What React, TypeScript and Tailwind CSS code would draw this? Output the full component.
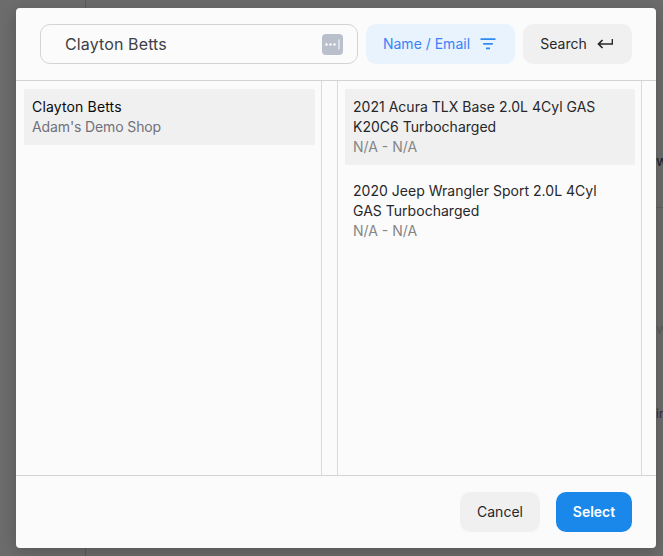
export default function App() {
  return (
    <div className="relative h-[556px] w-[663px] overflow-hidden bg-[#6b6b6b] font-['Inter',sans-serif] text-sm">
      <div className="flex h-full">
        <div className="h-full w-[86px] border-r border-[#5a5a5a] bg-[#6c6c6c]" />
        <div className="h-full flex-1 bg-[#6b6b6b]" />
      </div>
      <span className="absolute left-[656px] top-[151px] text-[14px] font-medium leading-5 text-[#1f2937]">w</span>
      <div className="absolute left-[656px] top-[207px] h-px w-[7px] bg-[#5f5f5f]" />
      <span className="absolute left-[656px] top-[319px] text-[14px] leading-5 text-[#5c5c5c]">w</span>
      <span className="absolute left-[656px] top-[404px] text-[12px] leading-5 text-[#2f2a4a]">in</span>

      <div className="absolute left-4 top-2 flex h-[540px] w-[640px] flex-col rounded-[4px] bg-[#fbfbfb] shadow-[0_4px_16px_rgba(0,0,0,0.2)]">
        <div className="flex h-[73px] shrink-0 gap-2 border-b border-[#d4d4d4] pb-4 pl-6 pr-6 pt-4">
          <div className="flex h-10 w-[318px] items-center rounded-[10px] border border-[#d4d4d4] bg-[#fbfbfb] pl-6 pr-[14px]">
            <span className="flex-1 text-base tracking-[0.12px] text-[#3f3f46]">Clayton Betts</span>
            <span className="flex h-[21px] w-[21px] items-center justify-center rounded-[4px] bg-[#b9bfcb]">
              <svg width="17" height="13" viewBox="0 0 17 13" fill="white">
                <circle cx="2.5" cy="6.5" r="1.2" />
                <circle cx="6.5" cy="6.5" r="1.2" />
                <circle cx="10.5" cy="6.5" r="1.2" />
                <rect x="14.5" y="1.5" width="1" height="10" />
              </svg>
            </span>
          </div>
          <div className="flex h-10 w-[149px] items-center justify-center gap-[10px] rounded-[10px] bg-[#e8f3fe] pr-[2px] text-[#3b82f6]">
            <span>Name / Email</span>
            <svg width="16" height="12" viewBox="0 0 16 12" fill="none" stroke="#2d8cf0" strokeWidth="1.7">
              <path d="M0.5 1.2H15.5M3.2 5.8H12.8M6 10.4H10" />
            </svg>
          </div>
          <div className="flex h-10 w-[109px] items-center justify-center gap-[10px] rounded-[10px] bg-[#f0f0f0] pr-[2px] text-[#27272a]">
            <span>Search</span>
            <svg width="16" height="12" viewBox="0 0 16 12" fill="none" stroke="#27272a" strokeWidth="1.7">
              <path d="M15.5 1V6H1.5M5.5 2L1.5 6L5.5 10" />
            </svg>
          </div>
        </div>

        <div className="flex min-h-0 flex-1">
          <div className="w-[306px] shrink-0 border-r border-[#d9d9d9] py-2 pl-2 pr-[6px]">
            <div className="h-14 rounded-[2px] bg-[#f0f0f0] px-2 py-2 leading-5">
              <div className="tracking-[0.15px] text-[#09090b]">Clayton Betts</div>
              <div className="tracking-[-0.12px] text-[#71717a]">Adam's Demo Shop</div>
            </div>
          </div>
          <div className="w-[15px] shrink-0" />
          <div className="w-[305px] shrink-0 border-x border-[#d9d9d9] py-2 pl-[7px] pr-[6px] leading-5">
            <div className="rounded-[2px] bg-[#f0f0f0] p-2">
              <div className="tracking-[0.02px] text-[#27272a]">2021 Acura TLX Base 2.0L 4Cyl GAS K20C6 Turbocharged</div>
              <div className="text-[#858585]">N/A - N/A</div>
            </div>
            <div className="mt-2 p-2">
              <div className="tracking-[0.02px] text-[#27272a]">2020 Jeep Wrangler Sport 2.0L 4Cyl GAS Turbocharged</div>
              <div className="text-[#858585]">N/A - N/A</div>
            </div>
          </div>
        </div>

        <div className="flex h-[73px] shrink-0 items-start justify-end gap-4 border-t border-[#d4d4d4] pr-6 pt-4">
          <div className="flex h-10 w-20 items-center justify-center rounded-[10px] bg-[#f0f0f0] text-[#27272a]">Cancel</div>
          <div className="flex h-10 w-[76px] items-center justify-center rounded-[10px] bg-[#1a88eb] font-semibold text-white">Select</div>
        </div>
      </div>
    </div>
  );
}
